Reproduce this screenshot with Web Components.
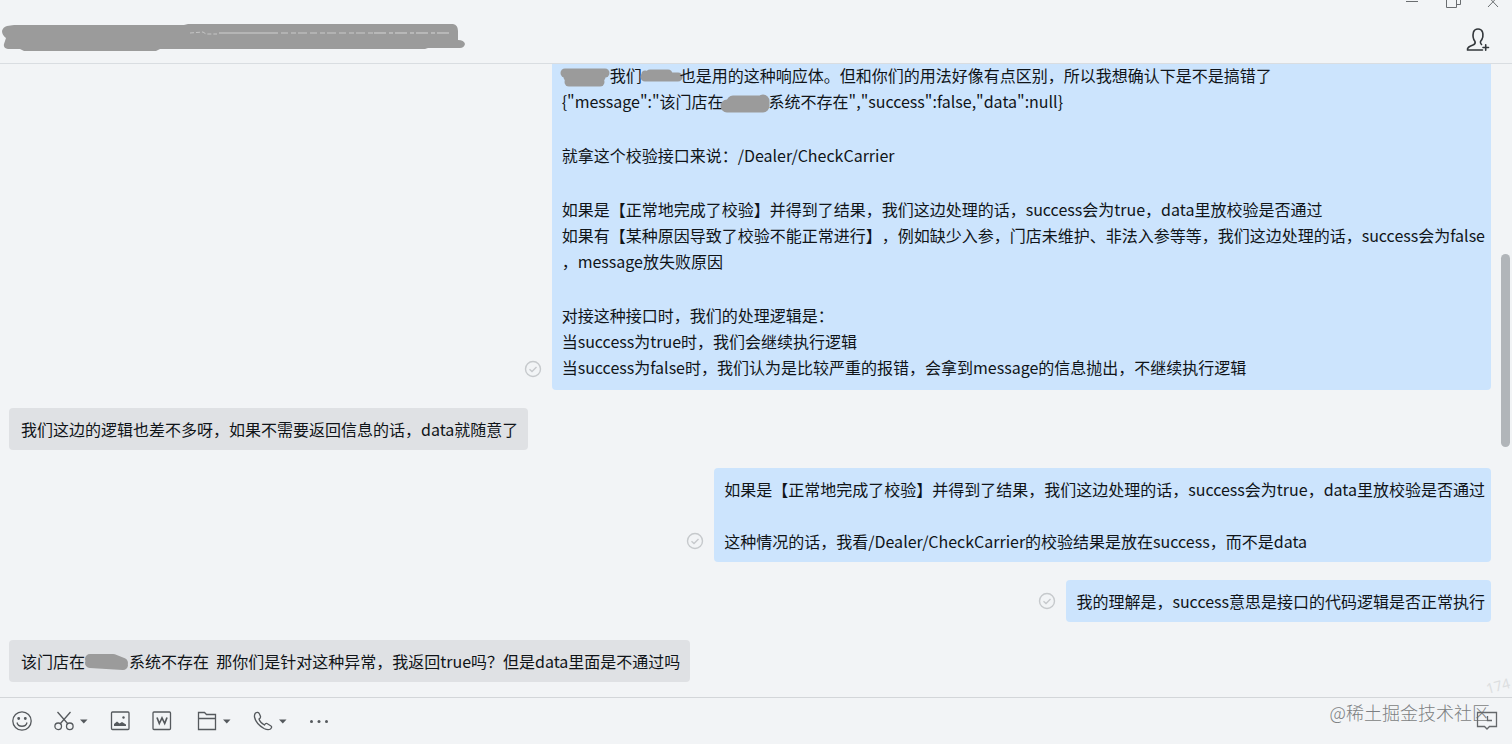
<!DOCTYPE html>
<html lang="zh-CN">
<head>
<meta charset="utf-8">
<title>聊天</title>
<style>
  html, body { margin: 0; height: 100%; }
  body { font: 16px/26px "Noto Sans CJK SC", sans-serif; text-spacing-trim: space-all; color: #101418; background: #f2f4f6; overflow: hidden; }
</style>
</head>
<body>
<chat-window></chat-window>
<script>
const define = (name, html, setup) => customElements.define(name, class extends HTMLElement {
  constructor() {
    super();
    const root = this.attachShadow({ mode: 'open' });
    const t = document.createElement('template');
    t.innerHTML = html;
    root.append(t.content.cloneNode(true));
  }
  connectedCallback() { if (setup) setup(this, this.shadowRoot); }
});

/* Grey scribble that hides a name inside a line of text */
const scribbles = {
  name: [48, '<path d="M3 10H43" stroke-width="9"/><path d="M7 19H38" stroke-width="9"/><path d="M6 14H39" stroke-width="9"/>'],
  short: [38, '<path d="M3 14H28M8 11H26M22 14H36" stroke-width="9"/><path d="M3 11V14" stroke-width="7"/>'],
  code: [45, '<path d="M3 17H37M9 13H39M39 12V17" stroke-width="13"/>'],
  store: [44, '<path d="M5 10L28 10L38 14M5 14L38 16" stroke-width="10"/>']
};
define('redacted-text', `
  <style>
    :host { display: inline-block; height: 20px; vertical-align: middle; }
    svg { display: block; overflow: visible; height: 26px; margin-top: -5px; }
  </style>
  <svg fill="none" stroke="#9b9b9b" stroke-linecap="round" stroke-linejoin="round" aria-hidden="true"></svg>`,
  (el, root) => {
    const [w, d] = scribbles[el.getAttribute('kind')];
    el.style.width = w + 'px';
    const svg = root.querySelector('svg');
    svg.setAttribute('width', w);
    svg.innerHTML = d;
  });

define('chat-message', `
  <style>
    :host { display: flex; align-items: flex-end; gap: 10px; flex: none; }
    :host([own]) { justify-content: flex-end; }
    .bubble { background: #dfe1e4; border-radius: 4px; padding: 8px 10px 8px 12px; display: flex; flex-direction: column; gap: 26px; white-space: nowrap; }
    :host([own]) .bubble { background: #cce4fd; padding: 8px 6px 8px 10px; }
    :host([own][long]) .bubble { gap: 28px; padding-bottom: 10px; }
    .read { display: none; width: 18px; height: 18px; margin-bottom: 12px; }
    :host([own]) .read { display: block; }
    ::slotted(p) { margin: 0; }
  </style>
  <svg class="read" viewBox="0 0 18 18" fill="none" stroke="#c6c9cc" stroke-width="1.400" role="img" aria-label="已读"><circle cx="9" cy="9" r="7.500"/><path d="M5.500 9.200L8 11.500L12.500 7"/></svg>
  <div class="bubble"><slot></slot></div>`);

define('chat-header', `
  <style>
    :host { display: flex; justify-content: space-between; height: 63px; flex: none; border-bottom: 1px solid #d9dde1; }
    .title { display: block; margin-top: 22px; }
    .side { display: flex; flex-direction: column; align-items: flex-end; }
    .win { display: flex; gap: 22px; height: 12px; margin-right: 12px; }
    button { border: 0; padding: 0; background: none; display: block; color: #6a6d70; }
    svg { display: block; }
    .win svg { margin-top: -6px; }
    .add { margin: 14px 22px 0 0; color: #33373b; }
  </style>
  <svg class="title" width="468" height="32" viewBox="0 0 468 32" role="img" aria-label="会话标题">
    <path d="M14 3H184L188 2H453Q458 3 458 9V18Q464 18 465 22Q464 26 460 26H428L425 27H160L156 29H24L20 27H8Q3 26 4 22L6 16Q2 13 2 9Q3 5 7 4Z" fill="#9b9b9b"/>
    <path d="M190 11L203 10L206 12H217" stroke="#c5c5c5" fill="none" stroke-dasharray="4 2"/>
    <path d="M219 11H278" stroke="#cfcfcf"/>
    <path d="M281 11H373" stroke="#c9c9c9" stroke-dasharray="7 3 5 2 9 3"/>
    <path d="M374 11H450" stroke="#d4d4d4" stroke-dasharray="12 3 4 2"/>
  </svg>
  <div class="side">
    <div class="win">
      <button aria-label="最小化"><svg width="20" height="18" fill="none" stroke="currentColor"><path d="M4 7.500H16"/></svg></button>
      <button aria-label="还原"><svg width="20" height="18" fill="none" stroke="currentColor"><path d="M2.500 0V13.500H12.500V3.500H2.500M12.500 10.500H16.500V0"/></svg></button>
      <button aria-label="关闭"><svg width="14" height="18" fill="none" stroke="currentColor"><path d="M2 2.500L12 13M12 2.500L2 13"/></svg></button>
    </div>
    <button class="add" aria-label="添加成员"><svg width="26" height="28" viewBox="0 0 26 28" fill="none" stroke="currentColor" stroke-width="1.600" stroke-linejoin="round" stroke-linecap="round"><path d="M18.500 24H3.500C3 21.500 5 20.500 9 19Q11.800 18 11 15.500C8.500 12.500 9 8 9.500 6Q10.500 3 14 3T18.500 6C19.500 9 18.500 13 16.500 15.500Q16 17.500 17.500 18.500M19 21.500H24.500M21.700 18.800V24.200"/></svg></button>
  </div>`);

const icons = {
  smile: '<circle cx="10" cy="10" r="9.200"/><path d="M5 11.500C6 16.500 14 16.500 15 11.500"/><circle cx="6.700" cy="7.500" r=".8" fill="currentColor"/><circle cx="13.300" cy="7.500" r=".8" fill="currentColor"/>',
  cut: '<path d="M3.500 1L14 13M16.500 1L6 13"/><circle cx="4.200" cy="15.300" r="3.300"/><circle cx="15.800" cy="15.300" r="3.300"/>',
  image: '<rect x="1.500" y="1" width="17.500" height="17.500" rx="1"/><path d="M4 15V13L7 10.500L9.500 12.500L12 11L16 13.500V15Z" fill="currentColor" stroke="none"/><circle cx="13.500" cy="6.500" r="1.200" fill="currentColor" stroke="none"/>',
  word: '<rect x="1" y="1" width="17.500" height="17.500" rx="1"/><path d="M5 6.500L7.300 12.500L10 7L12.700 12.500L15 6.500" stroke-width="1.700"/>',
  folder: '<path d="M1.500 18.500V1.500H7.500L9.500 3.500H18.500V18.500ZM1.500 7.500H18.500"/>',
  phone: '<path d="M2.500 2Q5 .5 6.500 3L7.500 5.500Q7.800 7 6 8Q7 11.500 11.500 14Q12.500 12 14 12.500L18 15Q19.500 16 17.500 18Q15 19.500 11 17.500Q3 13 1.500 6Q1.200 3.500 2.500 2Z"/>',
  more: '<g fill="currentColor" stroke="none"><circle cx="2.500" cy="10.500" r="1.500"/><circle cx="10" cy="10.500" r="1.500"/><circle cx="17.500" cy="10.500" r="1.500"/></g>'
};
define('tool-button', `
  <style>
    :host { display: block; }
    button { display: flex; align-items: center; gap: 6px; border: 0; padding: 0; background: none; color: #55595d; }
    svg { display: block; }
    .caret { display: none; }
    :host([menu]) .caret { display: block; }
  </style>
  <button><svg class="icon" width="20" height="20" viewBox="0 0 20 20" fill="none" stroke="currentColor" stroke-width="1.300"></svg><svg class="caret" width="8" height="5"><path d="M0 .5H7.500L3.750 4.500Z" fill="currentColor"/></svg></button>`,
  (el, root) => {
    root.querySelector('.icon').innerHTML = icons[el.getAttribute('icon')];
    root.querySelector('button').setAttribute('aria-label', el.getAttribute('label'));
  });

define('chat-toolbar', `
  <style>
    :host { display: flex; align-items: center; gap: 25px; height: 46px; flex: none; border-top: 1px solid #d3d6d9; padding: 0 14px 0 12px; position: relative; }
    .group { display: flex; gap: 22px; }
    .mark { margin-left: auto; font-size: 18px; font-weight: 300; color: #7c7f82; margin-right: 8px; padding-bottom: 18px; }
    .history { position: absolute; right: 14px; top: 12px; border: 0; padding: 0; background: none; color: #65686b; }
    svg { display: block; }
  </style>
  <div class="group">
    <tool-button icon="smile" label="表情"></tool-button>
    <tool-button icon="cut" label="截图" menu></tool-button>
    <tool-button icon="image" label="图片"></tool-button>
    <tool-button icon="word" label="文档"></tool-button>
  </div>
  <div class="group">
    <tool-button icon="folder" label="文件" menu></tool-button>
    <tool-button icon="phone" label="通话" menu></tool-button>
    <tool-button icon="more" label="更多"></tool-button>
  </div>
  <span class="mark">@稀土掘金技术社区</span>
  <button class="history" aria-label="聊天记录"><svg width="22" height="22" fill="none" stroke="currentColor" stroke-width="1.300"><path d="M1.500 2.500H20.500V16.500H13.500L11 19L8.500 16.500H1.500ZM11.500 6V10.500H16"/></svg></button>`);

define('chat-window', `
  <style>
    :host { display: flex; flex-direction: column; height: 100vh; }
    main { flex: 1; min-height: 0; overflow: hidden; position: relative; display: flex; flex-direction: column; justify-content: flex-end; gap: 18px; padding: 0 21px 15px 9px; }
    p { margin: 0; }
    .thumb { position: absolute; right: 2px; top: 30%; width: 9px; height: 193px; border-radius: 5px; background: #b1b5b9; }
    .faint { position: absolute; right: 2px; bottom: 2px; font: 14px/18px "Noto Sans", sans-serif; color: #dcdee0; transform: rotate(-15deg); }
  </style>
  <chat-header></chat-header>
  <main>
    <chat-message own long>
      <p><redacted-text kind="name"></redacted-text>我们<redacted-text kind="short"></redacted-text>也是用的这种响应体。但和你们的用法好像有点区别，所以我想确认下是不是搞错了<br>{"message":"该门店在<redacted-text kind="code"></redacted-text>系统不存在","success":false,"data":null}</p>
      <p>就拿这个校验接口来说：/Dealer/CheckCarrier</p>
      <p>如果是【正常地完成了校验】并得到了结果，我们这边处理的话，success会为true，data里放校验是否通过<br>如果有【某种原因导致了校验不能正常进行】，例如缺少入参，门店未维护、非法入参等等，我们这边处理的话，success会为false<br>，message放失败原因</p>
      <p>对接这种接口时，我们的处理逻辑是：<br>当success为true时，我们会继续执行逻辑<br>当success为false时，我们认为是比较严重的报错，会拿到message的信息抛出，不继续执行逻辑</p>
    </chat-message>
    <chat-message><p>我们这边的逻辑也差不多呀，如果不需要返回信息的话，data就随意了</p></chat-message>
    <chat-message own>
      <p>如果是【正常地完成了校验】并得到了结果，我们这边处理的话，success会为true，data里放校验是否通过</p>
      <p>这种情况的话，我看/Dealer/CheckCarrier的校验结果是放在success，而不是data</p>
    </chat-message>
    <chat-message own><p>我的理解是，success意思是接口的代码逻辑是否正常执行</p></chat-message>
    <chat-message><p>该门店在<redacted-text kind="store"></redacted-text>系统不存在&nbsp; 那你们是针对这种异常，我返回true吗？但是data里面是不通过吗</p></chat-message>
    <span class="faint">174</span>
    <div class="thumb"></div>
  </main>
  <chat-toolbar></chat-toolbar>`);
</script>
</body>
</html>
